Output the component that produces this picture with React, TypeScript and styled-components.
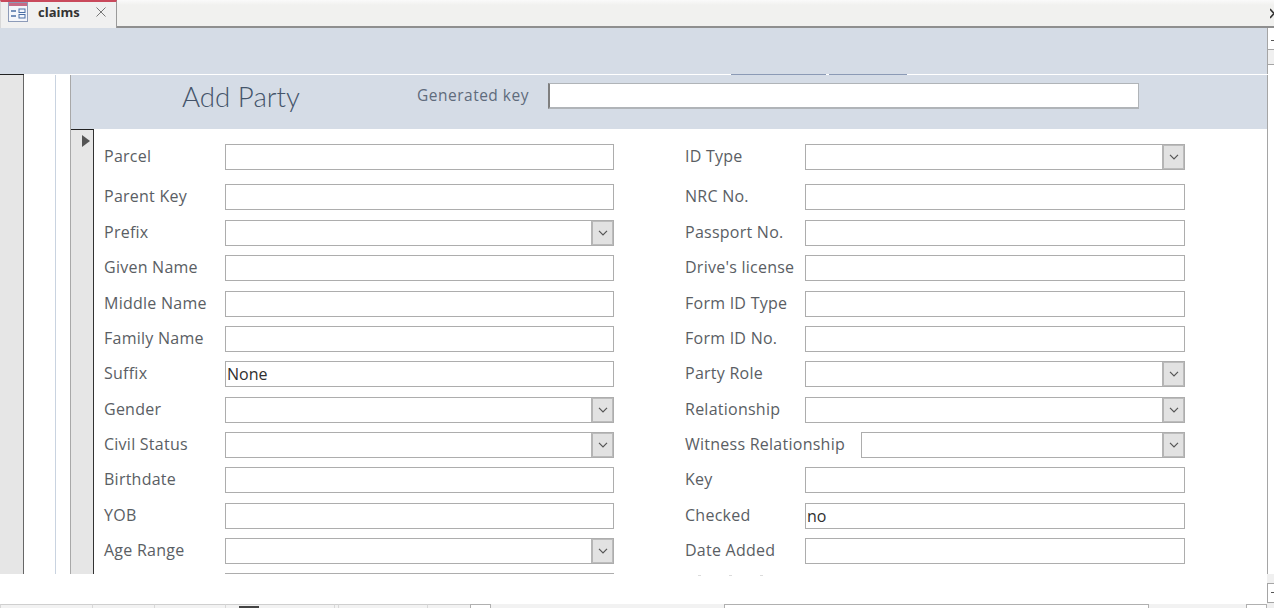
import React from "react";
import styled, { createGlobalStyle } from "styled-components";

const Global = createGlobalStyle`
  html, body { margin: 0; padding: 0; background: #fff; overflow: hidden; }
  * { box-sizing: border-box; }
`;
const Page = styled.div`
  width: 1274px; height: 608px; display: flex; flex-direction: column; overflow: hidden; background: #fff;
  font-family: "Open Sans", "Noto Sans", sans-serif;
`;
const TabBar = styled.div`
  height: 28px; flex: none; display: flex; justify-content: space-between; align-items: flex-start;
  background: linear-gradient(#fafafa 0, #f1f1ef 5px); border-bottom: 2px solid #8f8f8f;
`;
const Tab = styled.div`
  width: 117px; height: 28px; display: flex; align-items: center; background: #f0f0f0;
  border-top: 2px solid #c9495c; border-right: 1px solid #9a9a9a; border-left: 1px solid #d8d8d8;
  padding: 0 0 6px 7px;
`;
const TabLabel = styled.span`
  font: 700 13px "Open Sans", sans-serif; color: #333; margin-left: 10px; width: 58px;
`;
const TabScroll = styled.div`
  width: 4px; height: 11px; margin-top: 8px; overflow: hidden; display: flex;
`;
const Strip = styled.div`
  height: 46px; flex: none; display: flex; justify-content: flex-end; background: #d5dce6;
`;
const ScrollTop = styled.div`
  width: 7px; display: flex; flex-direction: column; border-left: 1px solid #a5a5a5;
`;
const ScrollBtn = styled.div`
  height: 22px; background: #fff; border-bottom: 1px solid #a5a5a5; position: relative;
  &::after { content: ""; position: absolute; right: 0; top: 12px; width: 3px; height: 1px; background: #555; }
`;
const ScrollGap = styled.div`height: 14px; background: #f0f0f0;`;
const ScrollRest = styled.div`flex: 1; background: #fff; border-top: 1px solid #a5a5a5;`;
const Divider = styled.div`
  height: 1px; flex: none; display: flex; background: #fff;
`;
const DividerDark = styled.div`width: 24px; background: #222;`;
const DividerSpace = styled.div<{ $w: number }>`width: ${p => p.$w}px;`;
const DividerBlue = styled.div<{ $w: number }>`width: ${p => p.$w}px; background: #8b9ab5;`;
const Body = styled.div`
  height: 499px; flex: none; display: flex; overflow: hidden;
`;
const Nav = styled.div`width: 24px; background: #e6e6e6; border-right: 1px solid #666;`;
const Gutter = styled.div`
  width: 47px; background: #fff; display: flex;
`;
const GutterA = styled.div`width: 32px; border-right: 1px solid #c9d3e0;`;
const GutterB = styled.div`width: 15px; border-right: 1px solid #a8a8a8;`;
const FormCol = styled.div`flex: 1; display: flex; flex-direction: column; min-width: 0;`;
const FormHead = styled.div`
  height: 54px; flex: none; background: #d5dce6; display: flex; align-items: flex-start;
  padding-left: 111px;
`;
const Title = styled.h1`
  margin: 6px 0 0; width: 235px; font: 300 27.7px/32px Lato, sans-serif; color: #44546a;
`;
const KeyLabel = styled.span`
  width: 131px; margin-top: 8px; font: 400 15.5px/24px "Open Sans", sans-serif; letter-spacing: .5px; color: #5f6b7c;
`;
const KeyInput = styled.div`
  width: 591px; height: 26px; margin-top: 8px; background: #fff; border: 1px solid #b0b4b8; border-bottom-width: 2px;
  border-left: 2px solid #7f7f7f;
`;
const Detail = styled.div`flex: 1; display: flex; min-height: 0;`;
const Selector = styled.div`
  width: 23px; flex: none; background: #e6e6e6; border-top: 1px solid #222; border-right: 1px solid #333;
  padding: 5px 0 0 11px;
`;
const Columns = styled.div`
  flex: 1; display: grid; grid-template-columns: 581px 1fr; padding: 15px 0 0 10px; background: #fff;
  align-items: start;
`;
const Column = styled.div`display: flex; flex-direction: column; gap: 9.33px;`;
const Row = styled.div<{ $after: number }>`
  display: flex; align-items: center; height: 26px; flex: none; margin-bottom: ${p => p.$after}px;
`;
const Label = styled.label<{ $w: number }>`
  width: ${p => p.$w}px; flex: none; font: 400 16px/26px "Open Sans", sans-serif; letter-spacing: .25px; color: #5a5e64;
  position: relative; top: -1px;
`;
const Field = styled.div<{ $w: number }>`
  width: ${p => p.$w}px; height: 26px; flex: none; display: flex; background: #fff; border: 1px solid #adadad;
  font: 400 16px/25px "Open Sans", sans-serif; color: #2f2f2f; padding-left: 1px;
`;
const Value = styled.span`flex: 1;`;
const DropBtn = styled.div`
  width: 22px; margin-left: auto; background: #e2e2e2; border: 1px solid #bcbcbc; border-left: 2px solid #b5b5b5;
  display: flex; align-items: center; justify-content: center;
`;
const Right = styled.div`width: 7px; flex: none; border-left: 1px solid #a5a5a5; background: #fff;`;
const Footer = styled.div`
  flex: 1; position: relative; display: flex; flex-direction: column; justify-content: space-between;
`;
const Specks = styled.div`
  display: flex; padding: 1px 0 0 698px; gap: 28px;
`;
const Speck = styled.span`width: 3px; height: 1px; background: #dcdcdc;`;
const Status = styled.div`
  height: 4px; background: #f2f2f2; display: flex;
`;
const Seg = styled.div<{ $w: number; $box?: boolean }>`
  width: ${p => p.$w}px; flex: none; position: relative;
  ${p => p.$box
    ? "background: #fff; border: 1px solid #b0b0b0; border-bottom: 0;"
    : "border-top: 1px solid #cfcfcf; border-left: 1px solid #d8d8d8;"}
`;
const Plain = styled.div<{ $w: number }>`width: ${p => p.$w}px; flex: none;`;
const Thumb = styled.div`
  position: absolute; left: 13px; bottom: 0; width: 20px; height: 2px; background: #444;
`;
const CornerTrack = styled.div`
  position: absolute; right: 0; top: 0; width: 7px; height: 34px; background: #f0f0f0; padding-top: 9px;
`;
const CornerBtn = styled.div`
  height: 20px; background: #fff; border: 1px solid #a5a5a5; border-right: 0; position: relative;
  &::after { content: ""; position: absolute; right: 0; top: 8px; width: 3px; height: 1px; background: #555; }
`;

const Chevron = () => (
  <svg width="10" height="6" viewBox="0 0 10 6"><path d="M1 .8l4 4 4-4" fill="none" stroke="#555" strokeWidth="1.2" /></svg>
);
const FormIcon = () => (
  <svg width="20" height="20" viewBox="0 0 20 20">
    <rect x=".5" y=".5" width="19" height="19" fill="#f4f6fb" stroke="#8d9bb8" />
    <rect x="1" y="1" width="18" height="3" fill="#c76a86" />
    <path d="M3 9h5M3 14h5" stroke="#4a6fa5" strokeWidth="1.5" />
    <rect x="11" y="7" width="6" height="3.5" fill="none" stroke="#4a6fa5" />
    <rect x="11" y="12.5" width="6" height="3.5" fill="none" stroke="#4a6fa5" />
  </svg>
);
const Cross = () => (
  <svg width="10" height="10" viewBox="0 0 10 10"><path d="M.5.5l9 9M9.5.5l-9 9" stroke="#777" strokeWidth="1" fill="none" /></svg>
);
const Pointer = () => (
  <svg width="8" height="12" viewBox="0 0 8 12" style={{ display: "block" }}><path d="M0 0l8 6-8 6z" fill="#555" /></svg>
);
const TabArrow = () => (
  <svg width="4" height="11" viewBox="0 0 4 11"><path d="M0 1l4 4.5L0 10" fill="none" stroke="#333" strokeWidth="1.6" /></svg>
);

type F = { label: string; value?: string; combo?: boolean; labelW?: number; w?: number };
const left: F[] = [
  { label: "Parcel" }, { label: "Parent Key" }, { label: "Prefix", combo: true }, { label: "Given Name" },
  { label: "Middle Name" }, { label: "Family Name" }, { label: "Suffix", value: "None" }, { label: "Gender", combo: true },
  { label: "Civil Status", combo: true }, { label: "Birthdate" }, { label: "YOB" }, { label: "Age Range", combo: true }, { label: "" },
];
const right: F[] = [
  { label: "ID Type", combo: true }, { label: "NRC No." }, { label: "Passport No." }, { label: "Drive's license" },
  { label: "Form ID Type" }, { label: "Form ID No." }, { label: "Party Role", combo: true }, { label: "Relationship", combo: true },
  { label: "Witness Relationship", combo: true, labelW: 176, w: 324 }, { label: "Key" }, { label: "Checked", value: "no" }, { label: "Date Added" },
];
const after = (i: number) => (i === 0 ? 4.67 : i === 1 ? 0.67 : 0);

const FieldRow = ({ f, i, lw, w }: { f: F; i: number; lw: number; w: number }) => (
  <Row $after={after(i)}>
    <Label $w={f.labelW ?? lw}>{f.label}</Label>
    <Field $w={f.w ?? w}>
      <Value>{f.value}</Value>
      {f.combo && <DropBtn><Chevron /></DropBtn>}
    </Field>
  </Row>
);

export default function App() {
  return (
    <Page>
      <Global />
      <TabBar>
        <Tab><FormIcon /><TabLabel>claims</TabLabel><Cross /></Tab>
        <TabScroll><TabArrow /></TabScroll>
      </TabBar>
      <Strip>
        <ScrollTop><ScrollBtn /><ScrollGap /><ScrollRest /></ScrollTop>
      </Strip>
      <Divider>
        <DividerDark />
        <DividerSpace $w={707} />
        <DividerBlue $w={95} />
        <DividerSpace $w={3} />
        <DividerBlue $w={78} />
      </Divider>
      <Body>
        <Nav />
        <Gutter><GutterA /><GutterB /></Gutter>
        <FormCol>
          <FormHead>
            <Title>Add Party</Title>
            <KeyLabel>Generated key</KeyLabel>
            <KeyInput />
          </FormHead>
          <Detail>
            <Selector><Pointer /></Selector>
            <Columns>
              <Column>{left.map((f, i) => <FieldRow key={i} f={f} i={i} lw={121} w={389} />)}</Column>
              <Column>{right.map((f, i) => <FieldRow key={i} f={f} i={i} lw={120} w={380} />)}</Column>
            </Columns>
          </Detail>
        </FormCol>
        <Right />
      </Body>
      <Footer>
        <Specks><Speck /><Speck /><Speck /></Specks>
        <CornerTrack><CornerBtn /></CornerTrack>
        <Status>
          <Seg $w={92} />
          <Seg $w={62} />
          <Seg $w={71} />
          <Seg $w={109}><Thumb /></Seg>
          <Seg $w={4} />
          <Seg $w={89} />
          <Seg $w={43} />
          <Seg $w={21} $box />
          <Plain $w={233} />
          <Seg $w={425} $box />
          <Plain $w={97} />
          <Seg $w={21} $box />
        </Status>
      </Footer>
    </Page>
  );
}
